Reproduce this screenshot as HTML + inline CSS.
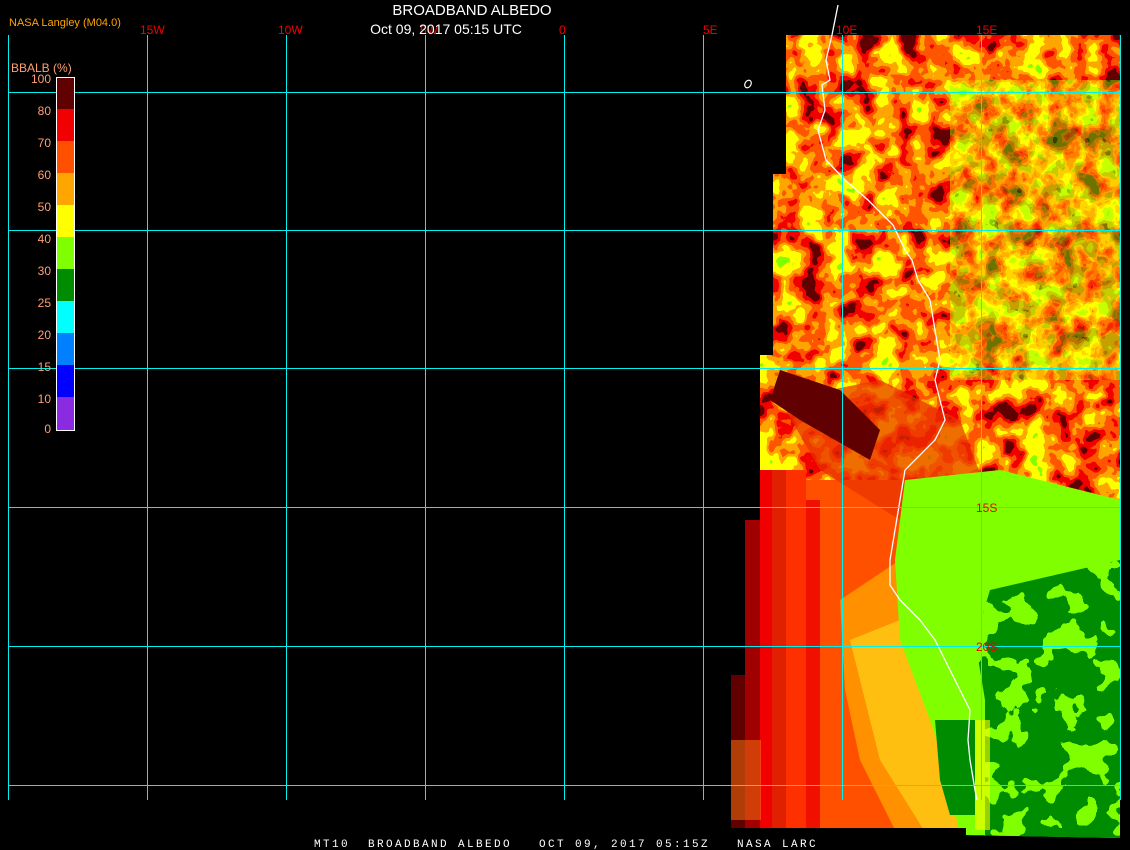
<!DOCTYPE html>
<html><head><meta charset="utf-8"><style>
html,body{margin:0;padding:0;background:#000;}
body{width:1130px;height:850px;overflow:hidden;position:relative;font-family:"Liberation Sans",sans-serif;}
svg{position:absolute;left:0;top:0}
</style></head><body>
<svg width="1130" height="850" viewBox="0 0 1130 850">
<defs>
<filter id="fTop" filterUnits="userSpaceOnUse" x="720" y="30" width="410" height="480" color-interpolation-filters="sRGB">
<feTurbulence type="fractalNoise" baseFrequency="0.04" numOctaves="3" seed="4"/>
<feColorMatrix type="matrix" values="1 0 0 0 0  1 0 0 0 0  1 0 0 0 0  0 0 0 0 1"/>
<feComponentTransfer>
<feFuncR type="discrete" tableValues="0.38 0.38 0.38 0.95 1 1 1 1 0.5 0.5"/>
<feFuncG type="discrete" tableValues="0 0 0 0 0.33 0.65 1 1 1 1"/>
<feFuncB type="discrete" tableValues="0 0 0 0 0 0 0 0 0 0"/>
</feComponentTransfer>
</filter>
<filter id="fRight" filterUnits="userSpaceOnUse" x="950" y="80" width="180" height="300" color-interpolation-filters="sRGB">
<feTurbulence type="fractalNoise" baseFrequency="0.06" numOctaves="3" seed="9"/>
<feColorMatrix type="matrix" values="1 0 0 0 0  1 0 0 0 0  1 0 0 0 0  0 0 0 0 1"/>
<feComponentTransfer>
<feFuncR type="discrete" tableValues="0 0 0.5 0.5 1 1 1 0.95 0.38"/>
<feFuncG type="discrete" tableValues="1 0.55 1 1 1 0.65 0.33 0 0"/>
<feFuncB type="discrete" tableValues="1 0 0 0 0 0 0 0 0"/>
</feComponentTransfer>
</filter>
<filter id="fLow" filterUnits="userSpaceOnUse" x="900" y="480" width="230" height="370" color-interpolation-filters="sRGB">
<feTurbulence type="fractalNoise" baseFrequency="0.035" numOctaves="3" seed="2"/>
<feColorMatrix type="matrix" values="1 0 0 0 0  1 0 0 0 0  1 0 0 0 0  0 0 0 0 1"/>
<feComponentTransfer>
<feFuncR type="discrete" tableValues="0 0 0 0 0.5 0.5 0.5"/>
<feFuncG type="discrete" tableValues="0.55 0.55 0.55 0.55 1 1 1"/>
<feFuncB type="discrete" tableValues="0 0 0 0 0 0 0"/>
</feComponentTransfer>
<feComposite in2="SourceGraphic" operator="in"/>
</filter>
<clipPath id="dat">
<polygon points="786,35 1120,35 1120,838 966,835 966,828 731,828 731,675 745,675 745,520 760,520 760,355 773,355 773,174 786,174"/>
</clipPath>
</defs>
<g clip-path="url(#dat)">
<rect x="720" y="30" width="410" height="480" fill="#e04000" filter="url(#fTop)"/>
<rect x="950" y="80" width="180" height="300" filter="url(#fRight)" opacity="0.45"/>
<rect x="725" y="480" width="250" height="360" fill="#ff5000"/>
<rect x="731" y="675" width="14" height="160" fill="#600000"/>
<rect x="745" y="520" width="15" height="320" fill="#a00000"/>
<rect x="760" y="470" width="12" height="370" fill="#f00000"/>
<rect x="772" y="470" width="14" height="370" fill="#e02000"/>
<rect x="786" y="470" width="20" height="370" fill="#ff3000"/>
<rect x="806" y="500" width="14" height="340" fill="#f01000"/>
<rect x="731" y="740" width="30" height="80" fill="#ff7a10" opacity="0.5"/>
<polygon points="840,600 900,560 960,720 980,840 900,840 860,760 845,690" fill="#ffa000" opacity="0.8"/>
<polygon points="850,640 900,620 950,720 960,840 930,840 880,760" fill="#ffee20" opacity="0.5"/>
<polygon points="880,380 960,420 990,500 900,520 820,470 780,400" fill="#e83000" opacity="0.7"/>
<polygon points="780,370 840,390 880,430 870,460 800,420 770,400" fill="#600000"/>
<polygon points="905,480 1000,470 1120,500 1120,840 960,840 950,780 930,720 900,640 895,560" fill="#80ff00"/>
<polygon points="990,590 1120,560 1120,840 985,840 985,700 975,640" fill="#80ff00" filter="url(#fLow)"/>
<polygon points="935,720 975,720 975,815 950,815 940,780" fill="#008c00"/>
<polygon points="975,720 975,830 990,830 990,720" fill="#ffff00" opacity="0.6"/>
</g>
<polyline fill="none" stroke="#fff" stroke-width="1.3" points="838,5 832,35 826,60 830,80 822,85 825,110 818,130 826,160 845,180 868,200 893,225 905,250 912,260 918,280 930,300 935,330 940,360 935,380 945,420 935,440 905,470 900,500 895,530 890,560 890,585 900,600 920,620 935,640 945,660 960,690 970,710 968,740 970,760 975,790 977,800"/>
<ellipse cx="748" cy="84" rx="3" ry="4" fill="none" stroke="#fff" stroke-width="1.2" transform="rotate(30 748 84)"/>
<g stroke="#00f0f0" stroke-width="1" fill="none" shape-rendering="crispEdges">
<line x1="8.5" y1="35" x2="8.5" y2="800"/>
<line x1="147.5" y1="35" x2="147.5" y2="800"/>
<line x1="286.5" y1="35" x2="286.5" y2="800"/>
<line x1="425.5" y1="35" x2="425.5" y2="800"/>
<line x1="564.5" y1="35" x2="564.5" y2="800"/>
<line x1="703.5" y1="35" x2="703.5" y2="800"/>
<line x1="842.5" y1="35" x2="842.5" y2="800"/>
<line x1="981.5" y1="35" x2="981.5" y2="800"/>
<line x1="1120.5" y1="35" x2="1120.5" y2="800"/>
<line x1="8" y1="92.5" x2="1120" y2="92.5"/>
<line x1="8" y1="230.5" x2="1120" y2="230.5"/>
<line x1="8" y1="368.5" x2="1120" y2="368.5"/>
<line x1="8" y1="507.5" x2="1120" y2="507.5"/>
<line x1="8" y1="646.5" x2="1120" y2="646.5"/>
<line x1="8" y1="785.5" x2="1120" y2="785.5"/>
</g>
<g shape-rendering="crispEdges">
<rect x="56" y="77" width="18" height="32" fill="#600000"/>
<rect x="56" y="109" width="18" height="32" fill="#f00000"/>
<rect x="56" y="141" width="18" height="32" fill="#ff5000"/>
<rect x="56" y="173" width="18" height="32" fill="#ffa500"/>
<rect x="56" y="205" width="18" height="32" fill="#ffff00"/>
<rect x="56" y="237" width="18" height="32" fill="#80ff00"/>
<rect x="56" y="269" width="18" height="32" fill="#008c00"/>
<rect x="56" y="301" width="18" height="32" fill="#00ffff"/>
<rect x="56" y="333" width="18" height="32" fill="#0080ff"/>
<rect x="56" y="365" width="18" height="32" fill="#0000ff"/>
<rect x="56" y="397" width="18" height="33" fill="#8a2be2"/>
<rect x="56.5" y="77.5" width="18" height="353" fill="none" stroke="#fff" stroke-width="1"/>
</g>
<g font-family="Liberation Sans, sans-serif" font-size="12" fill="#ffa070" text-anchor="end">
<text x="51" y="83">100</text>
<text x="51" y="115">80</text>
<text x="51" y="147">70</text>
<text x="51" y="179">60</text>
<text x="51" y="211">50</text>
<text x="51" y="243">40</text>
<text x="51" y="275">30</text>
<text x="51" y="307">25</text>
<text x="51" y="339">20</text>
<text x="51" y="371">15</text>
<text x="51" y="403">10</text>
<text x="51" y="433">0</text>
<text x="11" y="72" text-anchor="start">BBALB (%)</text>
</g>
<text x="9" y="26" font-family="Liberation Sans, sans-serif" font-size="11" fill="#ffa500">NASA Langley (M04.0)</text>
<text x="472" y="15" text-anchor="middle" font-family="Liberation Sans, sans-serif" font-size="15" fill="#fff">BROADBAND ALBEDO</text>
<g font-family="Liberation Sans, sans-serif" font-size="12" fill="#f00000">
<text x="140" y="34">15W</text>
<text x="278" y="34">10W</text>
<text x="420" y="34">5W</text>
<text x="559" y="34">0</text>
<text x="703" y="34">5E</text>
<text x="836" y="34">10E</text>
<text x="976" y="34">15E</text>
<text x="976" y="512">15S</text>
<text x="976" y="651">20S</text>
</g>
<text x="446" y="34" text-anchor="middle" font-family="Liberation Sans, sans-serif" font-size="14" fill="#fff">Oct 09, 2017 05:15 UTC</text>
<text x="314" y="847" font-family="Liberation Mono, monospace" font-size="11" fill="#fff" letter-spacing="2.4" style="white-space:pre" xml:space="preserve">MT10  BROADBAND ALBEDO   OCT 09, 2017 05:15Z   NASA LARC</text>
</svg>
</body></html>
